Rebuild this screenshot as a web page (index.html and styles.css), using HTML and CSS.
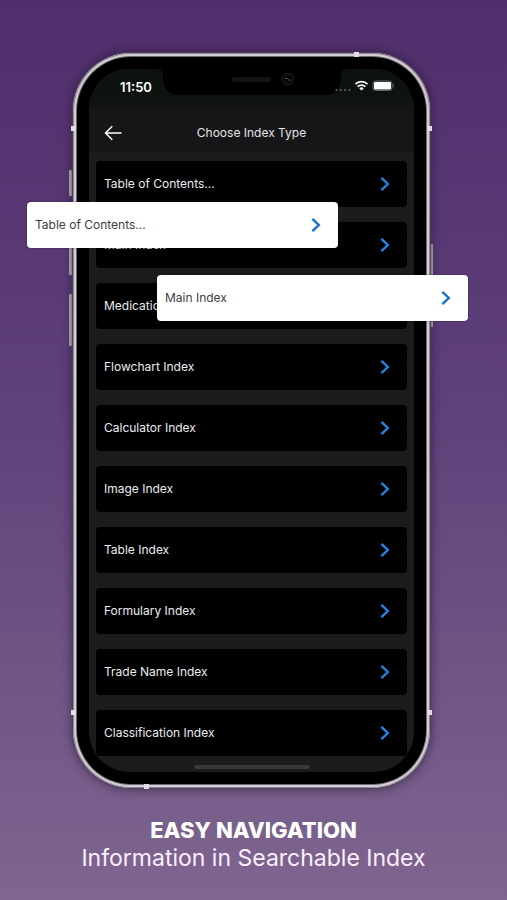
FILE: index.html
```html
<!DOCTYPE html>
<html lang="en">
<head>
<meta charset="utf-8">
<meta name="viewport" content="width=device-width, initial-scale=1">
<title>Easy Navigation</title>
<link rel="stylesheet" href="styles.css">
</head>
<body>
<svg class="symbols" aria-hidden="true">
  <symbol id="chevron" viewBox="0 0 10 16"><path d="M1.400 1.800 7.800 8l-6.400 6.200" fill="none" stroke="currentColor" stroke-width="2.400"/></symbol>
</svg>
<main class="poster">
  <section class="phone">
    <i class="key key-mute"></i><i class="key key-up"></i><i class="key key-down"></i><i class="key key-power"></i>
    <i class="seam seam-top"></i><i class="seam seam-bottom"></i>
    <i class="seam seam-lt"></i><i class="seam seam-rt"></i><i class="seam seam-lb"></i><i class="seam seam-rb"></i>
    <div class="bezel">
      <div class="screen">
        <div class="status">
          <time class="clock">11:50</time>
          <svg class="notch" viewBox="0 0 188 27" aria-hidden="true">
            <path d="M0 0h188q-5 0-5 6v3q0 17-17 17H22Q5 26 5 9V6q0-6-5-6z" fill="#000"/>
            <rect x="74" y="8" width="39" height="5" rx="2.500" fill="#131316"/>
            <circle cx="130" cy="10" r="6.500" fill="#131317"/>
            <circle cx="130" cy="10" r="4" fill="#050507"/>
            <path d="M127.500 9.500h2M130.500 11h2" stroke="#77777c" stroke-width="1"/>
          </svg>
          <svg class="signals" viewBox="0 0 60 14" aria-hidden="true">
            <g fill="#4b504d"><circle cx="2.500" cy="11" r="1.200"/><circle cx="6.800" cy="11" r="1.200"/><circle cx="11.100" cy="11" r="1.200"/><circle cx="15.400" cy="11" r="1.200"/></g>
            <g fill="none" stroke="#fff" stroke-width="1.800"><path d="M21.500 5.100a8.500 8.500 0 0 1 12 0M23.700 7.700a5.400 5.400 0 0 1 7.600 0"/></g>
            <path d="M25.300 9.400a3.200 3.200 0 0 1 4.400 0l-2.200 2.200z" fill="#fff"/>
            <rect x="39" y="2" width="19" height="9.500" rx="2.500" fill="#0c120e" stroke="#666b68"/>
            <rect x="40" y="3" width="17" height="7.500" rx="1.200" fill="#fff"/>
            <path d="M59.200 5v3.500q1-.5 1-1.750T59.200 5z" fill="#777"/>
          </svg>
        </div>
        <header class="bar">
          <button class="back" type="button" aria-label="Back"><svg viewBox="0 0 18 16"><path d="M8.300 1.200 1.500 8l6.800 6.800M1.500 8h16" fill="none" stroke="#fff" stroke-width="1.500"/></svg></button>
          <h1 class="title">Choose Index Type</h1>
        </header>
        <nav class="list">
          <a class="row" href="#">Table of Contents...<svg class="chev"><use href="#chevron"/></svg></a>
          <a class="row" href="#">Main Index<svg class="chev"><use href="#chevron"/></svg></a>
          <a class="row" href="#">Medication Index<svg class="chev"><use href="#chevron"/></svg></a>
          <a class="row" href="#">Flowchart Index<svg class="chev"><use href="#chevron"/></svg></a>
          <a class="row" href="#">Calculator Index<svg class="chev"><use href="#chevron"/></svg></a>
          <a class="row" href="#">Image Index<svg class="chev"><use href="#chevron"/></svg></a>
          <a class="row" href="#">Table Index<svg class="chev"><use href="#chevron"/></svg></a>
          <a class="row" href="#">Formulary Index<svg class="chev"><use href="#chevron"/></svg></a>
          <a class="row" href="#">Trade Name Index<svg class="chev"><use href="#chevron"/></svg></a>
          <a class="row" href="#">Classification Index<svg class="chev"><use href="#chevron"/></svg></a>
        </nav>
        <div class="home"></div>
      </div>
    </div>
    <a class="row callout callout-left" href="#">Table of Contents...<svg class="chev"><use href="#chevron"/></svg></a>
    <a class="row callout callout-right" href="#">Main Index<svg class="chev"><use href="#chevron"/></svg></a>
  </section>
  <footer class="caption">
    <h2 class="headline">EASY NAVIGATION</h2>
    <p class="tagline">Information in Searchable Index</p>
  </footer>
</main>
</body>
</html>
```
FILE: styles.css
```css
* { box-sizing: border-box; }

body {
  margin: 0;
  min-height: 100vh;
  background: linear-gradient(#502f6c, #5e407a 45%, #7e668f);
  font-family: Inter, "Liberation Sans", sans-serif;
}

.symbols { position: absolute; width: 0; height: 0; }

.poster {
  display: flex;
  flex-direction: column;
  align-items: center;
  padding: 53px 0 24px;
}

.phone {
  position: relative;
  width: calc(100% - 150px);
  max-width: 420px;
  margin-right: 4px;
  padding: 4px;
  border-radius: 58px;
  background: #6f6a72;
  box-shadow: inset 0 0 0 1px #8d8792, inset 0 0 0 3px #d3ced6, 0 0 1px 1px #50405a, 0 0 10px 2px rgba(25, 8, 40, .45);
}

.bezel {
  padding: 12px;
  border-radius: 54px;
  background: #000;
}

.screen {
  position: relative;
  overflow: hidden;
  border-radius: 40px;
  background: #1c1c1f;
}

.status {
  display: flex;
  justify-content: space-between;
  height: 42px;
  padding: 10px 20px 0 31px;
  background: linear-gradient(#0b120d, #0d140f 75%, #161618);
}

.clock {
  color: #fff;
  font-size: 13px;
  font-weight: 600;
  line-height: 16px;
}

.notch {
  position: absolute;
  top: 0;
  left: 50%;
  width: 188px;
  height: 27px;
  margin-left: -94px;
}

.signals { position: relative; width: 60px; height: 14px; }

.bar {
  display: grid;
  grid-template-columns: 18px 1fr 18px;
  align-items: center;
  height: 43px;
  padding: 2px 15px 0;
  border-bottom: 1px solid #202023;
  background: #161618;
}

.back {
  height: 16px;
  padding: 0;
  border: 0;
  background: none;
}

.back svg { display: block; width: 18px; height: 16px; }

.title {
  margin: 0;
  color: #e4e4e6;
  font-size: 12px;
  font-weight: 400;
  line-height: 16px;
  text-align: center;
}

.list {
  display: grid;
  gap: 15px;
  padding: 7px 7px 0;
}

.row {
  display: flex;
  align-items: center;
  justify-content: space-between;
  height: 46px;
  padding: 0 17px 0 8px;
  border-radius: 4px;
  background: #000;
  color: #ececee;
  font-size: 12px;
  line-height: 16px;
  text-decoration: none;
}

.chev { width: 10px; height: 16px; color: #2382e3; }

.home {
  width: 116px;
  height: 4px;
  margin: 9px auto 3px;
  border-radius: 2px;
  background: #39393c;
}

.callout {
  position: absolute;
  width: calc(100% - 46px);
  background: #fff;
  color: #3d3d42;
  box-shadow: 0 0 2px rgba(20, 10, 30, .5);
}

.callout .chev { color: #1670d0; }
.callout-left { top: 149px; left: -46px; }
.callout-right { top: 222px; right: -38px; }

.key {
  position: absolute;
  z-index: -1;
  width: 5px;
  border: 1px solid #54485c;
  border-radius: 2px;
  background: #b9b3be;
}

.key-mute { top: 116px; left: -5px; height: 28px; }
.key-up { top: 168px; left: -5px; height: 55px; }
.key-down { top: 240px; left: -5px; height: 54px; }
.key-power { top: 190px; right: -4px; height: 85px; }

.seam {
  position: absolute;
  width: 5px;
  height: 5px;
  background: #e2dce6;
}

.seam-top { top: -1px; right: 71px; }
.seam-bottom { bottom: -1px; left: 71px; }
.seam-lt { top: 73px; left: -2px; }
.seam-rt { top: 73px; right: -2px; }
.seam-lb { bottom: 73px; left: -2px; }
.seam-rb { bottom: 73px; right: -2px; }

.caption {
  padding-top: 28px;
  color: #fff;
  text-align: center;
}

.headline {
  margin: 0;
  font-size: 22px;
  font-weight: 800;
  line-height: 28px;
}

.tagline {
  margin: 0;
  color: #fbeeff;
  font-size: 23px;
  line-height: 28px;
}
```
